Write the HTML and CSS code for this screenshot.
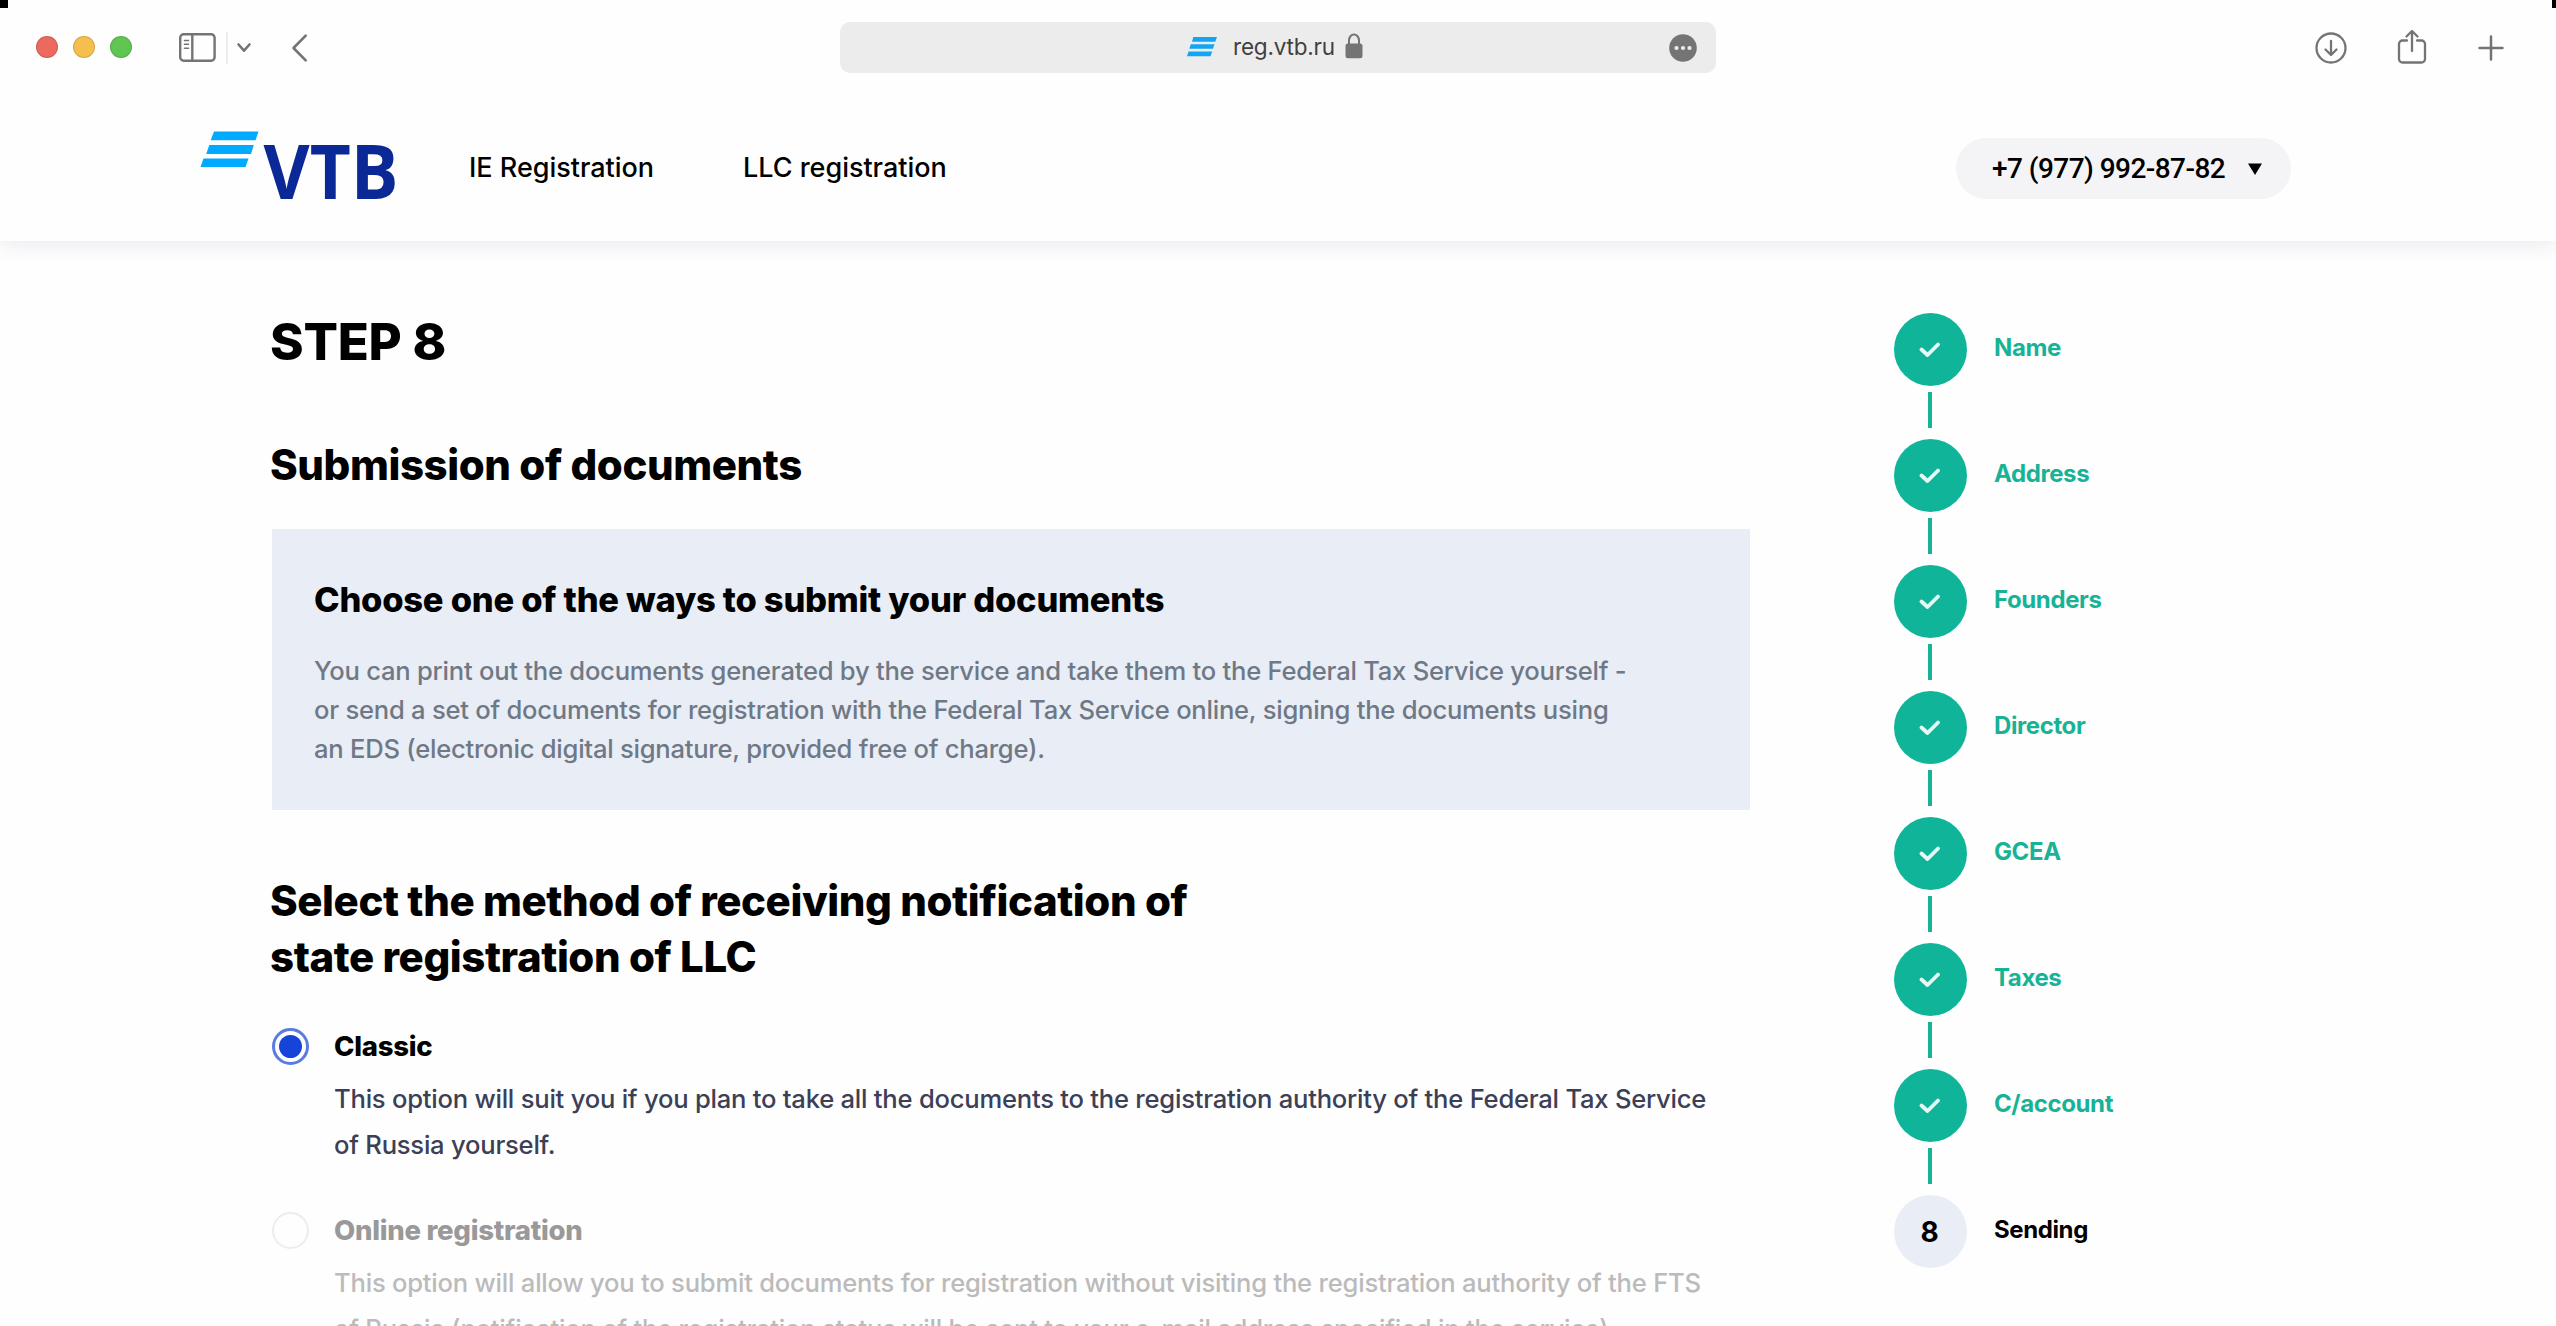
FILE: index.html
```
<!DOCTYPE html>
<html lang="en">
<head>
<meta charset="utf-8">
<title>LLC registration</title>
<link rel="stylesheet" href="styles.css">
</head>
<body>
<div class="window">
  <i class="corner corner-left"></i><i class="corner corner-right"></i>
  <div class="toolbar">
    <div class="toolbar-left">
      <div class="lights"><i class="light red"></i><i class="light yellow"></i><i class="light green"></i></div>
      <svg class="sidebar-icon" width="38" height="30" viewBox="0 0 38 30" fill="none" stroke="#747474" stroke-width="2.4"><rect x="1.2" y="1.3" width="34.4" height="26.4" rx="3.5"/><path d="M13.3 1.5v26"/><path d="M5.5 7.5h4M5.5 11.3h4M5.5 15.2h4" stroke-width="1.6" stroke-linecap="round"/></svg>
      <i class="divider"></i>
      <svg class="chevron" width="16" height="12" viewBox="0 0 16 12" fill="none" stroke="#747474" stroke-width="2.6" stroke-linecap="round" stroke-linejoin="round"><path d="M2.5 2.5L8 8.7l5.500-6.200"/></svg>
      <svg class="back" width="18" height="30" viewBox="0 0 18 30" fill="none" stroke="#747474" stroke-width="2.6" stroke-linecap="round" stroke-linejoin="round"><path d="M14.700 2.700L2.500 15l12.200 12.300"/></svg>
    </div>
    <div class="address">
      <svg class="favicon" width="31" height="20" viewBox="0 0 31 20" fill="#12a5f4"><path d="M6.300 0H30l-1.700 4.700H5zM3.800 7.300H27.500l-1.600 4.500H2.300zM1.500 14.500H25.200L23.500 19.300H0z"/></svg>
      <span class="url">reg.vtb.ru</span>
      <svg class="lock" width="18" height="26" viewBox="0 0 18 26"><path d="M4 12V7.500a5 6 0 0 1 10 0V12" fill="none" stroke="#747474" stroke-width="2"/><rect x=".5" y="10.500" width="17" height="14.700" rx="2.500" fill="#747474"/></svg>
      <svg class="more" width="28" height="28" viewBox="0 0 28 28"><circle cx="14" cy="14" r="13.800" fill="#747474"/><g fill="#ececec"><circle cx="7.500" cy="14" r="2.100"/><circle cx="14" cy="14" r="2.100"/><circle cx="20.500" cy="14" r="2.100"/></g></svg>
    </div>
    <div class="toolbar-right">
      <svg width="32" height="32" viewBox="0 0 32 32" fill="none" stroke="#747474" stroke-width="2.300" stroke-linecap="round" stroke-linejoin="round"><circle cx="16" cy="16" r="14.500"/><path d="M16 9v13.500M10.500 17.500L16 23l5.500-5.500"/></svg>
      <svg class="share" width="30" height="36" viewBox="0 0 30 36" fill="none" stroke="#747474" stroke-width="2.300" stroke-linecap="round" stroke-linejoin="round"><path d="M10 11.500H5.500a3.500 3.500 0 0 0-3.500 3.500V30a3.500 3.500 0 0 0 3.500 3.500h19A3.500 3.500 0 0 0 28 30V15a3.500 3.500 0 0 0-3.500-3.500H20"/><path d="M15 22V2.200M9.500 7.500L15 2l5.500 5.500"/></svg>
      <svg class="plus" width="26" height="26" viewBox="0 0 26 26" stroke="#747474" stroke-width="2.500" stroke-linecap="round"><path d="M13 1.500v23M1.500 13h23"/></svg>
    </div>
  </div>

  <header class="site-header">
    <svg class="logo" width="196" height="70" viewBox="0 0 196 70">
      <path fill="#00aaff" d="M14 1.500H58.500L55.500 10.300H10.700zM9.300 15H53.800L51 24H6.200zM3.500 28.500H48.500L45.500 37H.500z"/>
      <text class="logo-text" x="63.500" y="69" textLength="135" lengthAdjust="spacingAndGlyphs">VTB</text>
    </svg>
    <nav class="nav"><a>IE Registration</a><a>LLC registration</a></nav>
    <div class="phone"><span>+7 (977) 992-87-82</span><svg width="14" height="12" viewBox="0 0 14 12"><path d="M0 .500h14L7 12z"/></svg></div>
  </header>

  <main class="page">
    <section class="content">
      <h1>STEP 8</h1>
      <h2>Submission of documents</h2>
      <div class="notice">
        <h3>Choose one of the ways to submit your documents</h3>
        <p>You can print out the documents generated by the service and take them to the Federal Tax Service yourself -<br>or send a set of documents for registration with the Federal Tax Service online, signing the documents using<br>an EDS (electronic digital signature, provided free of charge).</p>
      </div>
      <h2 class="method">Select the method of receiving notification of<br>state registration of LLC</h2>
      <div class="option">
        <i class="radio checked"></i>
        <div>
          <h4>Classic</h4>
          <p>This option will suit you if you plan to take all the documents to the registration authority of the Federal Tax Service<br>of Russia yourself.</p>
        </div>
      </div>
      <div class="option disabled">
        <i class="radio"></i>
        <div>
          <h4>Online registration</h4>
          <p>This option will allow you to submit documents for registration without visiting the registration authority of the FTS<br>of Russia (notification of the registration status will be sent to your e-mail address specified in the service).</p>
        </div>
      </div>
    </section>

    <ol class="steps">
      <li class="step"><span class="dot"><svg class="tick" viewBox="0 0 22 18"><path d="M2.500 8.500L8.500 14 19 3.500"/></svg></span><span class="label">Name</span></li>
      <li class="step"><span class="dot"><svg class="tick" viewBox="0 0 22 18"><path d="M2.500 8.500L8.500 14 19 3.500"/></svg></span><span class="label">Address</span></li>
      <li class="step"><span class="dot"><svg class="tick" viewBox="0 0 22 18"><path d="M2.500 8.500L8.500 14 19 3.500"/></svg></span><span class="label">Founders</span></li>
      <li class="step"><span class="dot"><svg class="tick" viewBox="0 0 22 18"><path d="M2.500 8.500L8.500 14 19 3.500"/></svg></span><span class="label">Director</span></li>
      <li class="step"><span class="dot"><svg class="tick" viewBox="0 0 22 18"><path d="M2.500 8.500L8.500 14 19 3.500"/></svg></span><span class="label">GCEA</span></li>
      <li class="step"><span class="dot"><svg class="tick" viewBox="0 0 22 18"><path d="M2.500 8.500L8.500 14 19 3.500"/></svg></span><span class="label">Taxes</span></li>
      <li class="step"><span class="dot"><svg class="tick" viewBox="0 0 22 18"><path d="M2.500 8.500L8.500 14 19 3.500"/></svg></span><span class="label">C/account</span></li>
      <li class="step current"><span class="dot">8</span><span class="label">Sending</span></li>
    </ol>
  </main>
</div>
</body>
</html>
```
FILE: styles.css
```
* { box-sizing: border-box; }
html, body { margin: 0; height: 100%; overflow: hidden; }
body { font-family: Inter, "Liberation Sans", sans-serif; color: #000; background: #fefefe; }
h1, h2, h3, h4, p, ol { margin: 0; padding: 0; }
svg { display: block; flex: none; }

.window { position: relative; height: 1326px; overflow: hidden; display: flex; flex-direction: column; }
.corner { position: absolute; top: 0; height: 8px; background: #000; }
.corner-left { left: 0; width: 8px; }
.corner-right { right: 0; width: 4px; }

/* Browser toolbar */
.toolbar { height: 95px; flex: none; display: grid; grid-template-columns: 840px 876px 1fr; align-items: center; }
.toolbar-left { display: flex; align-items: center; padding-left: 36px; }
.lights { display: flex; gap: 14.8px; width: 143px; margin-top: -1px; }
.light { width: 22px; height: 22px; border-radius: 50%; border: 1px solid rgba(0, 0, 0, .12); }
.red { background: #ec695f; }
.yellow { background: #f5bf4f; }
.green { background: #61c554; }
.divider { width: 2px; height: 32px; margin-left: 9px; background: #ededed; }
.chevron { margin: 1px 0 0 8px; }
.back { margin: 1px 0 0 39px; }
.address { height: 51px; border-radius: 10px; background: #ececec; display: flex; align-items: center; padding: 0 19px 0 347px; }
.favicon { margin-top: -2px; }
.url { margin: -2px 0 0 15px; font-size: 22.5px; line-height: 30px; letter-spacing: -.2px; color: #404040; }
.lock { margin: -4px 0 0 10px; }
.more { margin-left: auto; }
.toolbar-right { display: flex; align-items: center; padding-left: 599px; }
.share { margin: -1px 0 0 50px; }
.plus { margin: 1px 0 0 51px; }

/* Site header */
.site-header { height: 146px; flex: none; display: flex; align-items: flex-start; padding: 35px 265px 0 200px; background: #fefefe; box-shadow: 0 4px 20px rgba(30, 40, 90, .09); clip-path: inset(0 0 -40px 0); }
.logo { overflow: visible; }
.logo-text { font-family: "Open Sans", sans-serif; font-weight: 700; font-size: 76px; fill: #0a2896; }
.nav { display: flex; gap: 89px; margin: 20px 0 0 73px; font-size: 27px; font-weight: 500; line-height: 36px; letter-spacing: -.02px; }
.phone { width: 335px; height: 61px; margin: 8px 0 0 auto; padding: 0 29px 0 36px; border-radius: 31px; background: #f4f4f6; display: flex; align-items: center; justify-content: space-between; white-space: nowrap; font-family: Roboto, sans-serif; font-size: 28px; font-weight: 500; letter-spacing: -.55px; }

/* Page */
.page { flex: 1; min-height: 0; display: flex; align-items: flex-start; }
.content { width: 1750px; padding: 69px 0 0 271px; }
h1 { margin-left: -1px; font-size: 51px; font-weight: 800; line-height: 64px; letter-spacing: -.25px; }
h2 { margin: 63px 0 0 -1px; font-size: 42px; font-weight: 800; line-height: 56px; letter-spacing: -.42px; white-space: nowrap; }
.notice { width: 1478px; height: 281px; margin: 36px 0 0 1px; padding: 48px 42px 0; background: #e9edf6; }
h3 { font-size: 34.5px; font-weight: 800; line-height: 46px; letter-spacing: -.24px; }
.notice p { margin-top: 28px; font-size: 25.6px; font-weight: 500; line-height: 39px; letter-spacing: -.25px; color: #6f7985; white-space: nowrap; }
.method { letter-spacing: -.42px; }
.option { display: flex; gap: 25px; margin: 41px 0 0 1px; height: 143.5px; }
.option h4 { font-size: 27.5px; font-weight: 800; line-height: 40px; letter-spacing: -.25px; }
.option p { margin-top: 10px; font-size: 25.6px; font-weight: 500; line-height: 46px; letter-spacing: -.235px; color: #3b4056; white-space: nowrap; }
.radio { flex: none; width: 37px; height: 37px; margin-top: 2px; border-radius: 50%; border: 2px solid #ededed; }
.radio.checked { border: 3px solid #5b7be0; display: flex; align-items: center; justify-content: center; }
.radio.checked::before { content: ""; width: 23px; height: 23px; border-radius: 50%; background: #1644d9; }
.option.disabled { margin-top: 40px; }
.option.disabled h4 { color: #999; }
.option.disabled p { color: #bbb; letter-spacing: -.225px; }

/* Progress */
.steps { list-style: none; margin: 72px 0 0 144px; }
.step { position: relative; height: 126px; display: flex; align-items: flex-start; gap: 27px; color: #18b396; }
.dot { width: 73px; height: 73px; border-radius: 50%; background: #10b599; display: flex; align-items: center; justify-content: center; font-size: 28px; font-weight: 700; color: #000; }
.tick { width: 22px; height: 18px; margin-left: -2px; fill: none; stroke: #e6faf5; stroke-width: 3.8; stroke-linecap: round; stroke-linejoin: round; }
.step::after { content: ""; position: absolute; left: 34px; top: 79px; width: 4px; height: 36px; background: #18b396; }
.step.current::after { display: none; }
.label { font-size: 24px; font-weight: 700; line-height: 69px; letter-spacing: -.4px; }
.current { color: #000; }
.current .dot { background: #e9edf6; padding-right: 2px; }
```
